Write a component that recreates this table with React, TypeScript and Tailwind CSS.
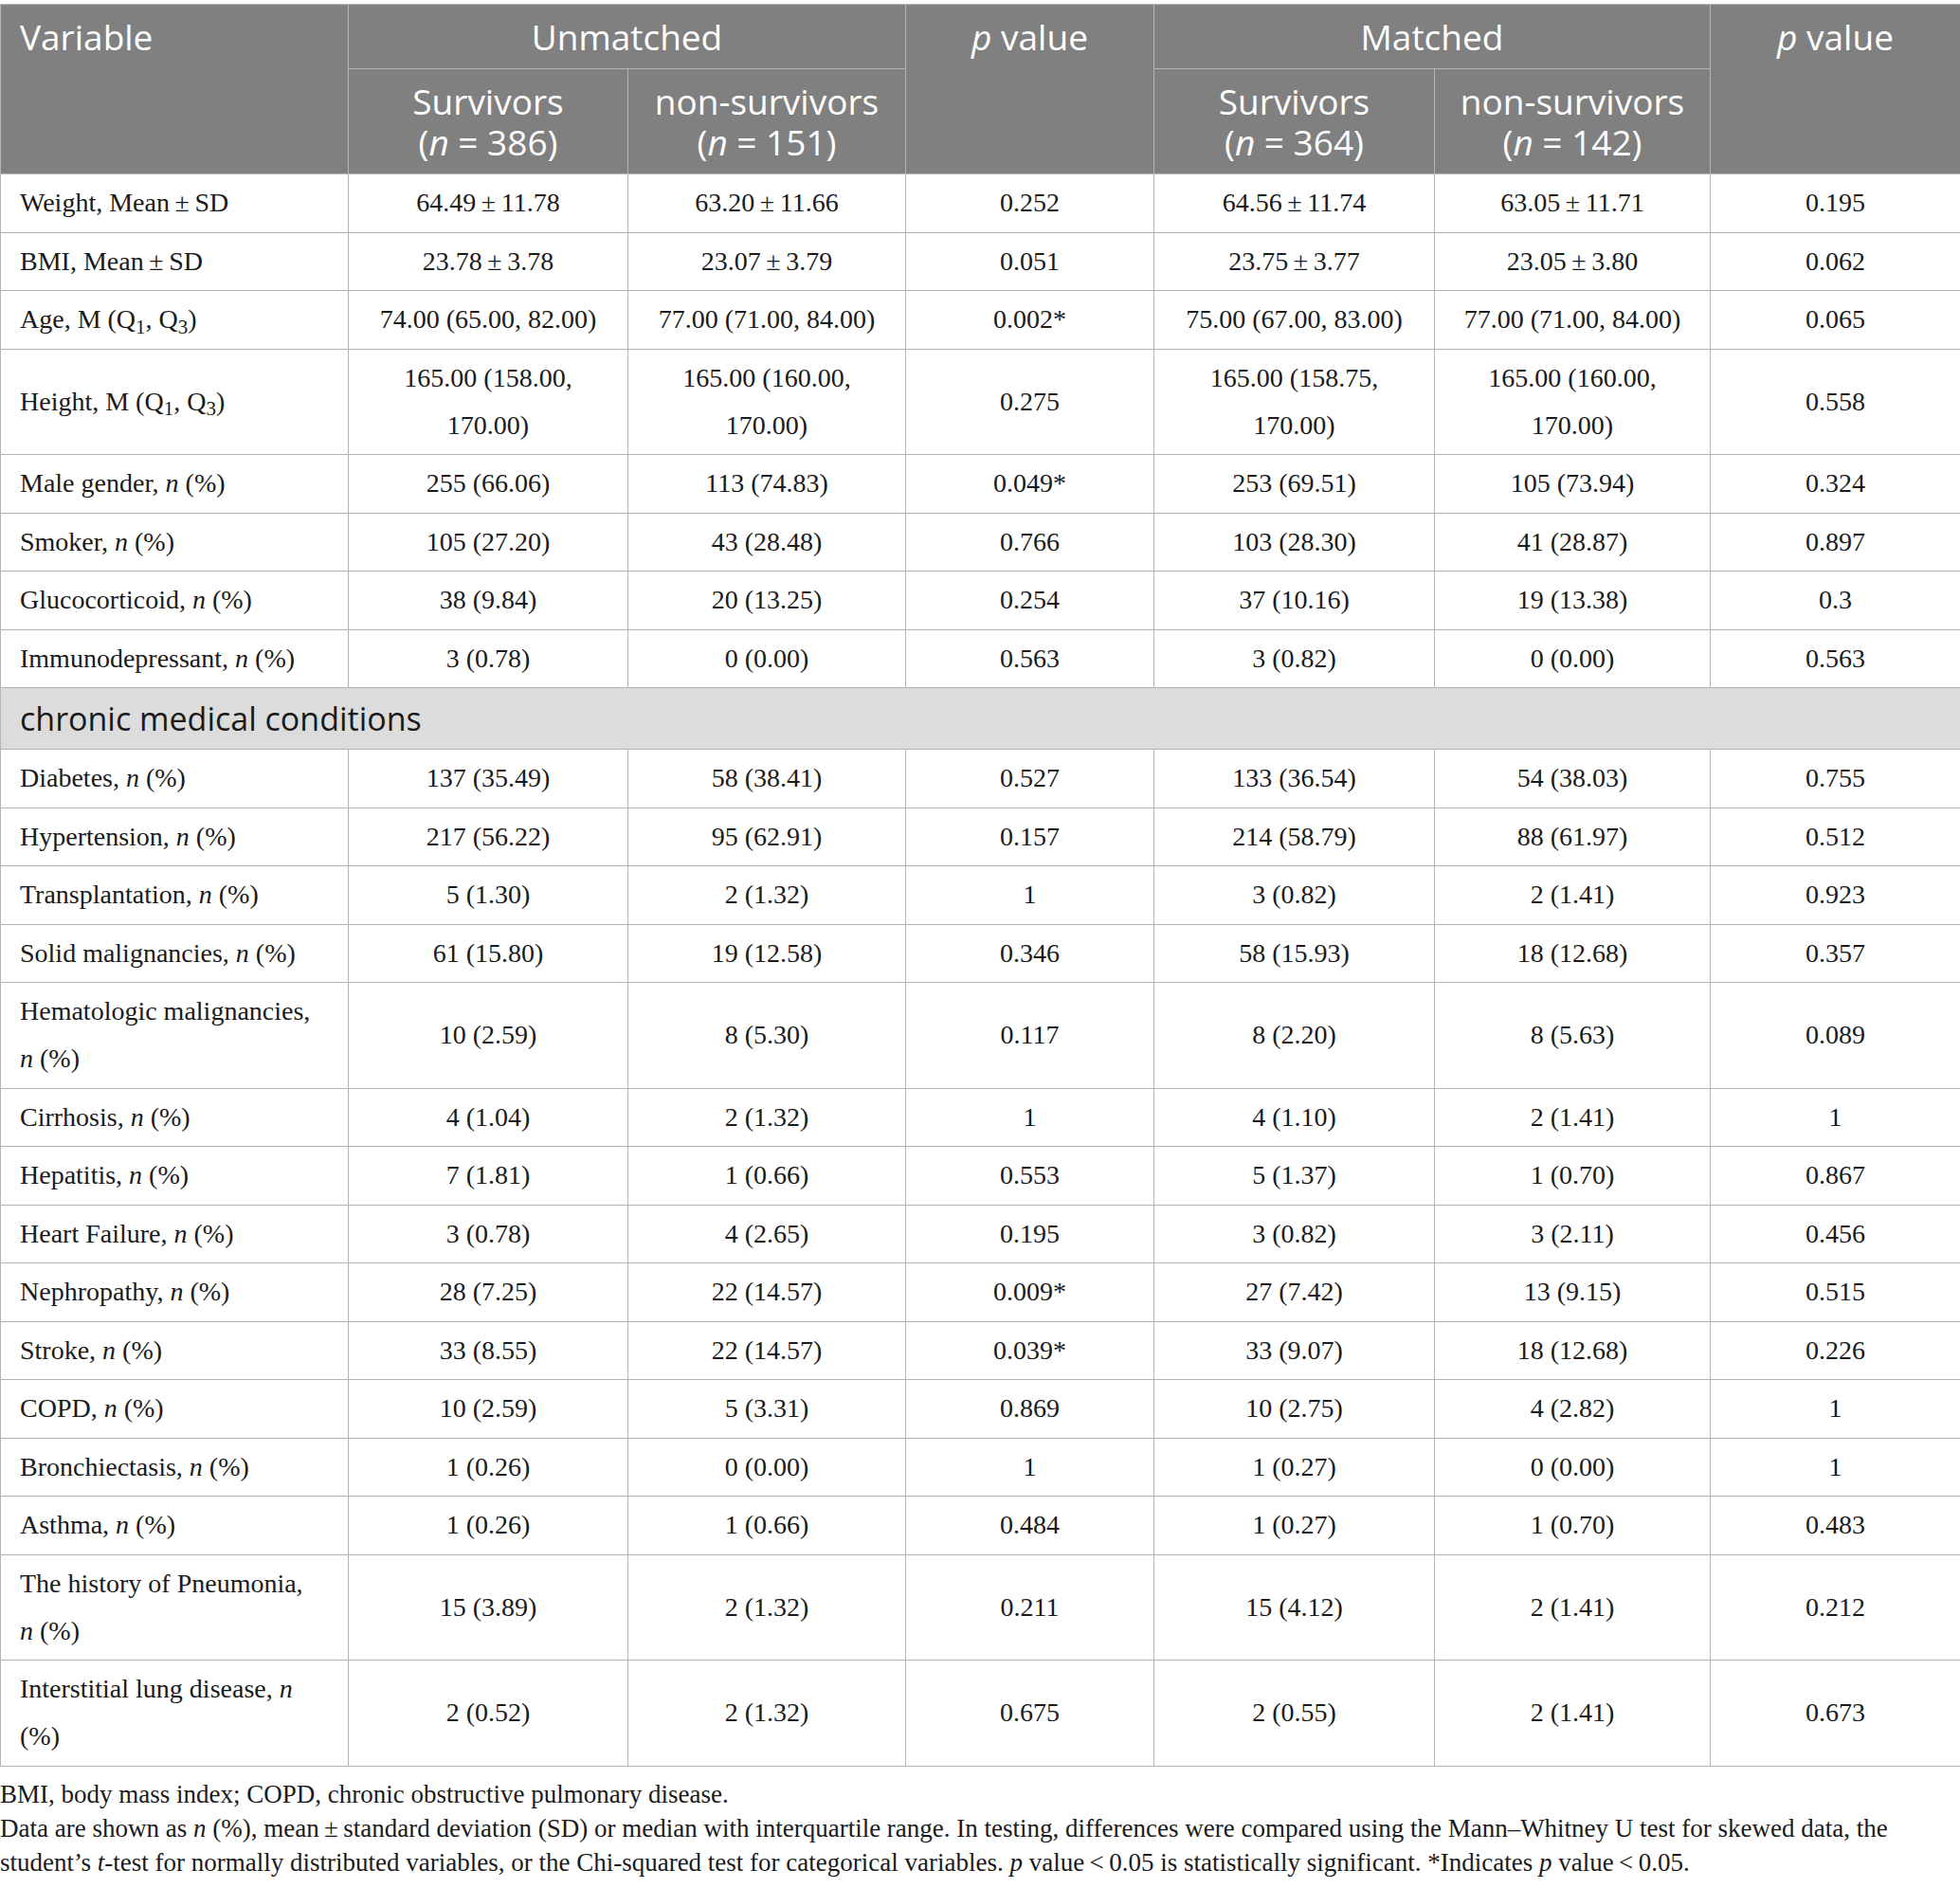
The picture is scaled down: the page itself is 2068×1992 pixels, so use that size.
import React from "react";

const T = "\u2009";
const N = () => <i>n</i>;

type Row = { label: React.ReactNode; v: React.ReactNode[] };

const pct = (s: string) => (
  <>
    {s}, <N /> (%)
  </>
);

const top: Row[] = [
  { label: <>Weight, Mean{T}±{T}SD</>, v: [`64.49${T}±${T}11.78`, `63.20${T}±${T}11.66`, "0.252", `64.56${T}±${T}11.74`, `63.05${T}±${T}11.71`, "0.195"] },
  { label: <>BMI, Mean{T}±{T}SD</>, v: [`23.78${T}±${T}3.78`, `23.07${T}±${T}3.79`, "0.051", `23.75${T}±${T}3.77`, `23.05${T}±${T}3.80`, "0.062"] },
  {
    label: (
      <>
        Age, M (Q<sub>1</sub>, Q<sub>3</sub>)
      </>
    ),
    v: ["74.00 (65.00, 82.00)", "77.00 (71.00, 84.00)", "0.002*", "75.00 (67.00, 83.00)", "77.00 (71.00, 84.00)", "0.065"],
  },
  {
    label: (
      <>
        Height, M (Q<sub>1</sub>, Q<sub>3</sub>)
      </>
    ),
    v: [
      <>165.00 (158.00,<br />170.00)</>,
      <>165.00 (160.00,<br />170.00)</>,
      "0.275",
      <>165.00 (158.75,<br />170.00)</>,
      <>165.00 (160.00,<br />170.00)</>,
      "0.558",
    ],
  },
  { label: pct("Male gender"), v: ["255 (66.06)", "113 (74.83)", "0.049*", "253 (69.51)", "105 (73.94)", "0.324"] },
  { label: pct("Smoker"), v: ["105 (27.20)", "43 (28.48)", "0.766", "103 (28.30)", "41 (28.87)", "0.897"] },
  { label: pct("Glucocorticoid"), v: ["38 (9.84)", "20 (13.25)", "0.254", "37 (10.16)", "19 (13.38)", "0.3"] },
  { label: pct("Immunodepressant"), v: ["3 (0.78)", "0 (0.00)", "0.563", "3 (0.82)", "0 (0.00)", "0.563"] },
];

const chronic: Row[] = [
  { label: pct("Diabetes"), v: ["137 (35.49)", "58 (38.41)", "0.527", "133 (36.54)", "54 (38.03)", "0.755"] },
  { label: pct("Hypertension"), v: ["217 (56.22)", "95 (62.91)", "0.157", "214 (58.79)", "88 (61.97)", "0.512"] },
  { label: pct("Transplantation"), v: ["5 (1.30)", "2 (1.32)", "1", "3 (0.82)", "2 (1.41)", "0.923"] },
  { label: pct("Solid malignancies"), v: ["61 (15.80)", "19 (12.58)", "0.346", "58 (15.93)", "18 (12.68)", "0.357"] },
  {
    label: (
      <>
        Hematologic malignancies,
        <br />
        <N /> (%)
      </>
    ),
    v: ["10 (2.59)", "8 (5.30)", "0.117", "8 (2.20)", "8 (5.63)", "0.089"],
  },
  { label: pct("Cirrhosis"), v: ["4 (1.04)", "2 (1.32)", "1", "4 (1.10)", "2 (1.41)", "1"] },
  { label: pct("Hepatitis"), v: ["7 (1.81)", "1 (0.66)", "0.553", "5 (1.37)", "1 (0.70)", "0.867"] },
  { label: pct("Heart Failure"), v: ["3 (0.78)", "4 (2.65)", "0.195", "3 (0.82)", "3 (2.11)", "0.456"] },
  { label: pct("Nephropathy"), v: ["28 (7.25)", "22 (14.57)", "0.009*", "27 (7.42)", "13 (9.15)", "0.515"] },
  { label: pct("Stroke"), v: ["33 (8.55)", "22 (14.57)", "0.039*", "33 (9.07)", "18 (12.68)", "0.226"] },
  { label: pct("COPD"), v: ["10 (2.59)", "5 (3.31)", "0.869", "10 (2.75)", "4 (2.82)", "1"] },
  { label: pct("Bronchiectasis"), v: ["1 (0.26)", "0 (0.00)", "1", "1 (0.27)", "0 (0.00)", "1"] },
  { label: pct("Asthma"), v: ["1 (0.26)", "1 (0.66)", "0.484", "1 (0.27)", "1 (0.70)", "0.483"] },
  {
    label: (
      <>
        The history of Pneumonia,
        <br />
        <N /> (%)
      </>
    ),
    v: ["15 (3.89)", "2 (1.32)", "0.211", "15 (4.12)", "2 (1.41)", "0.212"],
  },
  {
    label: (
      <>
        Interstitial lung disease, <N />
        <br />
        (%)
      </>
    ),
    v: ["2 (0.52)", "2 (1.32)", "0.675", "2 (0.55)", "2 (1.41)", "0.673"],
  },
];

const th =
  "border border-[#b4b4b4] bg-[#808080] text-white font-normal text-[37px] leading-[43px] py-3 px-5 font-['Open_Sans',sans-serif]";
const td =
  "border border-[#b4b4b4] px-5 py-[5.25px] text-[28px] leading-[50px] text-[#1a1a1a] align-middle font-['Liberation_Serif',serif]";

function BodyRow({ r }: { r: Row }) {
  return (
    <tr>
      <td className={`${td} text-left`}>{r.label}</td>
      {r.v.map((c, i) => (
        <td key={i} className={`${td} text-center`}>
          {c}
        </td>
      ))}
    </tr>
  );
}

export default function App() {
  return (
    <div className="w-[2068px] bg-white pt-1 pb-2">
      <table className="w-full table-fixed border-collapse">
        <colgroup>
          <col className="w-[367px]" />
          <col className="w-[295px]" />
          <col className="w-[293px]" />
          <col className="w-[262px]" />
          <col className="w-[296px]" />
          <col className="w-[291px]" />
          <col className="w-[264px]" />
        </colgroup>
        <thead>
          <tr>
            <th rowSpan={2} className={`${th} text-left align-top`}>
              Variable
            </th>
            <th colSpan={2} className={`${th} text-center`}>
              Unmatched
            </th>
            <th rowSpan={2} className={`${th} text-center align-top`}>
              <i>p</i> value
            </th>
            <th colSpan={2} className={`${th} text-center`}>
              Matched
            </th>
            <th rowSpan={2} className={`${th} text-center align-top`}>
              <i>p</i> value
            </th>
          </tr>
          <tr>
            <th className={`${th} text-center`}>
              Survivors
              <br />(<i>n</i> = 386)
            </th>
            <th className={`${th} text-center`}>
              non-survivors
              <br />(<i>n</i> = 151)
            </th>
            <th className={`${th} text-center`}>
              Survivors
              <br />(<i>n</i> = 364)
            </th>
            <th className={`${th} text-center`}>
              non-survivors
              <br />(<i>n</i> = 142)
            </th>
          </tr>
        </thead>
        <tbody>
          {top.map((r, i) => (
            <BodyRow key={i} r={r} />
          ))}
          <tr>
            <td
              colSpan={7}
              className="border border-[#b4b4b4] bg-[#dddcdd] px-5 py-[10.5px] text-left text-[34px] leading-[43px] text-[#1a1a1a] font-['Open_Sans',sans-serif]"
            >
              chronic medical conditions
            </td>
          </tr>
          {chronic.map((r, i) => (
            <BodyRow key={i} r={r} />
          ))}
        </tbody>
      </table>
      <div className="mt-[11px] text-[27px] leading-[36px] text-[#1a1a1a] font-['Liberation_Serif',serif]">
        <p>BMI, body mass index; COPD, chronic obstructive pulmonary disease.</p>
        <p>
          Data are shown as <i>n</i> (%), mean{T}±{T}standard deviation (SD) or median with interquartile range. In
          testing, differences were compared using the Mann–Whitney U test for skewed data, the
          <br />
          student’s <i>t</i>-test for normally distributed variables, or the Chi-squared test for categorical variables.{" "}
          <i>p</i> value{T}&lt;{T}0.05 is statistically significant. *Indicates <i>p</i> value{T}&lt;{T}0.05.
        </p>
      </div>
    </div>
  );
}
